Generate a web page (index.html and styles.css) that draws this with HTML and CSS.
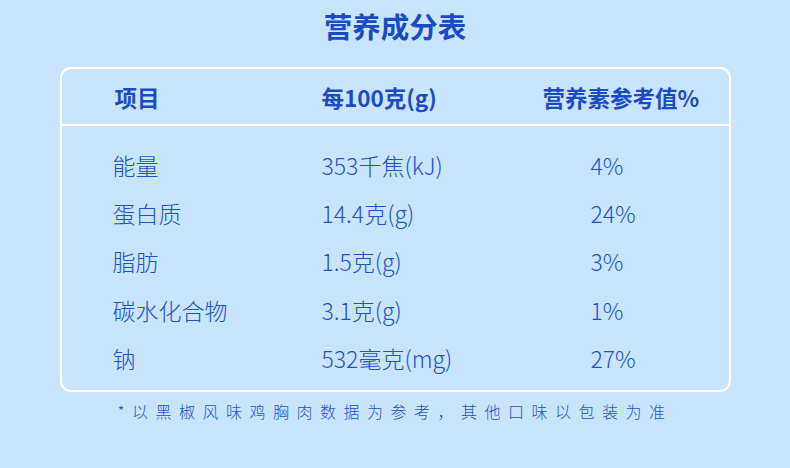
FILE: index.html
```html
<!DOCTYPE html>
<html lang="zh-CN">
<head>
<meta charset="utf-8">
<title>营养成分表</title>
<link rel="stylesheet" href="styles.css">
</head>
<body>
<main class="page">
  <h1 class="title">营养成分表</h1>
  <section class="card">
    <div class="row head">
      <div class="c1">项目</div>
      <div class="c2">每100克(g)</div>
      <div class="c3">营养素参考值%</div>
    </div>
    <div class="body">
      <div class="row">
        <div class="c1">能量</div>
        <div class="c2">353千焦(kJ)</div>
        <div class="c3 val">4%</div>
      </div>
      <div class="row">
        <div class="c1">蛋白质</div>
        <div class="c2">14.4克(g)</div>
        <div class="c3 val">24%</div>
      </div>
      <div class="row">
        <div class="c1">脂肪</div>
        <div class="c2">1.5克(g)</div>
        <div class="c3 val">3%</div>
      </div>
      <div class="row">
        <div class="c1">碳水化合物</div>
        <div class="c2">3.1克(g)</div>
        <div class="c3 val">1%</div>
      </div>
      <div class="row">
        <div class="c1">钠</div>
        <div class="c2">532毫克(mg)</div>
        <div class="c3 val">27%</div>
      </div>
    </div>
  </section>
  <p class="note">*以黑椒风味鸡胸肉数据为参考，其他口味以包装为准</p>
</main>
</body>
</html>
```
FILE: styles.css
```css
* { box-sizing: border-box; }
html, body {
  margin: 0;
  padding: 0;
  background: #c9e5fd;
}
body {
  width: 790px;
  height: 468px;
  overflow: hidden;
  font-family: "Noto Sans CJK SC", "Noto Sans", sans-serif;
  color: #2152c9;
}
.page {
  display: flex;
  flex-direction: column;
  align-items: center;
  padding-top: 7px;
}
.title {
  margin: 0;
  font-size: 28.5px;
  line-height: 38px;
  font-weight: 700;
  color: #1a4bc5;
  letter-spacing: 0;
}
.card {
  margin-top: 22px;
  width: 671px;
  height: 325px;
  border: 2px solid #ffffff;
  border-radius: 11px;
}
.row {
  display: grid;
  grid-template-columns: 209px 221px 1fr;
  padding-left: 51px;
  align-items: center;
  height: 48.2px;
  font-size: 23px;
  line-height: 30px;
  font-weight: 300;
}
.row.head {
  height: 57px;
  font-weight: 700;
  font-size: 22.5px;
  color: #1a4bc5;
  border-bottom: 2px solid #ffffff;
}
.row.head .c1 { padding-left: 2px; }
.body {
  padding-top: 15px;
}
.val { padding-left: 48px; }
.note {
  margin: 7px 0 0;
  font-size: 16px;
  line-height: 24px;
  letter-spacing: 7.5px;
  font-weight: 300;
  color: #2152c9;
}
```
